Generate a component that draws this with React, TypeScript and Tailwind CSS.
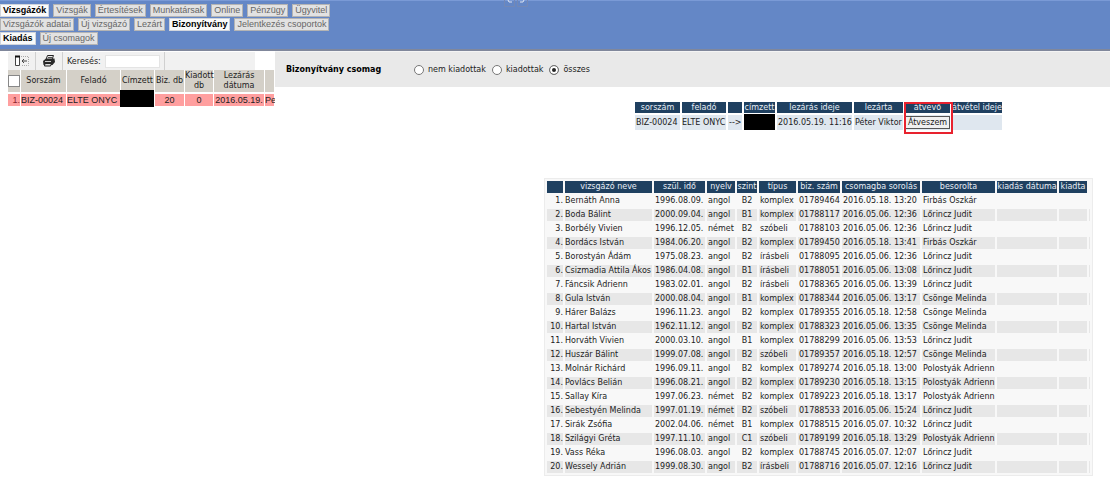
import React from "react";

const mainTabs = ["Vizsgázók", "Vizsgák", "Értesítések", "Munkatársak", "Online", "Pénzügy", "Ügyvitel"];
const subTabs = ["Vizsgázók adatai", "Új vizsgázó", "Lezárt", "Bizonyítvány", "Jelentkezés csoportok"];
const pageTabs = ["Kiadás", "Új csomagok"];

// name, birth date, language, level, type, certificate no., packed at, packed by
const candidates = [
  ["Bernáth Anna", "1996.08.09.", "angol", "B2", "komplex", "01789464", "2016.05.18. 13:20", "Firbás Oszkár"],
  ["Boda Bálint", "2000.09.04.", "angol", "B1", "komplex", "01788117", "2016.05.06. 12:36", "Lőrincz Judit"],
  ["Borbély Vivien", "1996.12.05.", "német", "B2", "szóbeli", "01788103", "2016.05.06. 12:36", "Lőrincz Judit"],
  ["Bordács István", "1984.06.20.", "angol", "B2", "komplex", "01789450", "2016.05.18. 13:41", "Firbás Oszkár"],
  ["Borostyán Ádám", "1975.08.23.", "angol", "B2", "írásbeli", "01788095", "2016.05.06. 12:36", "Lőrincz Judit"],
  ["Csizmadia Attila Ákos", "1986.04.08.", "angol", "B1", "írásbeli", "01788051", "2016.05.06. 13:08", "Lőrincz Judit"],
  ["Fáncsik Adrienn", "1983.02.01.", "angol", "B2", "írásbeli", "01788365", "2016.05.06. 13:39", "Lőrincz Judit"],
  ["Gula István", "2000.08.04.", "angol", "B1", "komplex", "01788344", "2016.05.06. 13:17", "Csönge Melinda"],
  ["Hárer Balázs", "1996.11.23.", "angol", "B2", "komplex", "01789355", "2016.05.18. 12:58", "Csönge Melinda"],
  ["Hartal István", "1962.11.12.", "angol", "B2", "komplex", "01788323", "2016.05.06. 13:35", "Csönge Melinda"],
  ["Horváth Vivien", "2000.03.10.", "angol", "B1", "komplex", "01788299", "2016.05.06. 13:53", "Lőrincz Judit"],
  ["Huszár Bálint", "1999.07.08.", "angol", "B2", "szóbeli", "01789357", "2016.05.18. 12:57", "Csönge Melinda"],
  ["Molnár Richárd", "1996.09.11.", "angol", "B2", "komplex", "01789274", "2016.05.18. 13:00", "Polostyák Adrienn"],
  ["Povlács Belián", "1996.08.21.", "angol", "B2", "komplex", "01789230", "2016.05.18. 13:15", "Polostyák Adrienn"],
  ["Sallay Kíra", "1997.06.23.", "német", "B2", "komplex", "01789223", "2016.05.18. 13:17", "Polostyák Adrienn"],
  ["Sebestyén Melinda", "1997.01.19.", "német", "B2", "szóbeli", "01788533", "2016.05.06. 15:24", "Lőrincz Judit"],
  ["Sirák Zsófia", "2002.04.06.", "német", "B1", "komplex", "01788515", "2016.05.07. 10:32", "Lőrincz Judit"],
  ["Szilágyi Gréta", "1997.11.10.", "angol", "C1", "szóbeli", "01789199", "2016.05.18. 13:29", "Polostyák Adrienn"],
  ["Vass Réka", "1996.08.03.", "angol", "B2", "komplex", "01788745", "2016.05.07. 12:07", "Lőrincz Judit"],
  ["Wessely Adrián", "1999.08.30.", "angol", "B2", "írásbeli", "01788716", "2016.05.07. 12:16", "Lőrincz Judit"],
];

interface TabRowProps {
  tabs: string[];
  active?: string;
}

const TabRow: React.FC<TabRowProps> = ({ tabs, active }) => (
  <nav className="flex gap-1">
    {tabs.map((tab) => (
      <a
        key={tab}
        href="#"
        className={
          tab === active
            ? "border border-gray-300 bg-[#fafafa] px-[2px] font-bold text-black"
            : "border border-[#b4b4b4] bg-[#e2e2e2] px-[2px] text-[#666]"
        }
      >
        {tab}
      </a>
    ))}
  </nav>
);

const Header = () => (
  <header className="relative flex h-[51px] flex-col gap-px border-t border-b-2 border-t-[#7a9ad6] border-b-[#80879b] bg-[#6487c6] pt-[3px] font-['Liberation_Sans',sans-serif] text-[9px] leading-[11px] whitespace-nowrap">
    <TabRow tabs={mainTabs} active="Vizsgázók" />
    <TabRow tabs={subTabs} active="Bizonyítvány" />
    <TabRow tabs={pageTabs} active="Kiadás" />
    <svg className="absolute -top-px left-[504px]" width="24" height="7" fill="none">
      <path d="M.5 0v6.500h10V0M13.500 0v6.500h10V0" stroke="#7388b5" />
      <path d="M4 0l1 2h3M20 0l-1 2h-3" stroke="#dfe6f3" />
    </svg>
  </header>
);

const PackageList = () => (
  <aside className="w-[275px] shrink-0 overflow-hidden pt-px pl-2">
    <div className="mr-5 flex h-[18px] items-center bg-[#f1f1f1]">
      <button aria-label="Panel" className="flex h-full w-7 items-center justify-center border-r border-[#d0d0d0]">
        <svg width="15" height="12" fill="none">
          <path d="M1.500 1.500h4v9h-4z" fill="#fff" stroke="#444" />
          <path d="M1 1.500h5" stroke="#111" strokeWidth="2" />
          <path d="M7 1.500h7.500v9H7" stroke="#aaa" strokeDasharray="1 1" />
          <path d="M8 6h5M10 4L8 6l2 2" stroke="#444" />
        </svg>
      </button>
      <button aria-label="Nyomtatás" className="flex h-full w-[27px] items-center justify-center border-r border-[#d0d0d0]">
        <svg width="12" height="12">
          <path d="M4.500 .5h6L9 4.500H3z" fill="#eee" stroke="#222" />
          <path d="M5 2.500h4" stroke="#555" />
          <path d="M0 6l3-2.500h8.500L12 7l-2.500 3H.5z" fill="#2a2a2a" />
          <path d="M2 6.500h6" stroke="#ccc" />
          <path d="M2 8.500h6.500l-1 2.500h-6z" fill="#ddd" stroke="#222" />
        </svg>
      </button>
      <label htmlFor="search" className="pt-px pl-1">
        Keresés:
      </label>
      <input id="search" className="ml-1 h-[13px] w-[55px] border border-[#e4e4e4] bg-white px-1 outline-none" />
      <div className="ml-1 h-full border-l border-[#d0d0d0]" />
    </div>
    <table className="-ml-px w-[268px] table-fixed border-separate border-spacing-x-px border-spacing-y-0 whitespace-nowrap">
      <colgroup>
        <col className="w-[12px]" />
        <col className="w-[45px]" />
        <col className="w-[53px]" />
        <col className="w-[33px]" />
        <col className="w-[29px]" />
        <col className="w-[28px]" />
        <col className="w-[50px]" />
        <col />
      </colgroup>
      <thead>
        <tr className="h-[22px] bg-[#d4d0c8] leading-[10px] [&>th]:p-0 [&>th]:font-normal">
          <th>
            <input
              type="checkbox"
              aria-label="Összes kijelölése"
              className="block size-3 appearance-none border border-[#888] bg-white"
            />
          </th>
          <th>Sorszám</th>
          <th>Feladó</th>
          <th>Címzett</th>
          <th>Biz. db</th>
          <th>
            Kiadott
            <br />
            db
          </th>
          <th>
            Lezárás
            <br />
            dátuma
          </th>
          <th />
        </tr>
      </thead>
      <tbody>
        <tr className="font-['Liberation_Sans',sans-serif] text-[9px] leading-3 [&>td]:border-t-2 [&>td]:border-white [&>td]:bg-[#ff9f9f] [&>td]:p-0">
          <td className="text-right text-[#8a2630]">1.</td>
          <td>BIZ-00024</td>
          <td>ELTE ONYC</td>
          <td className="relative">
            <div className="absolute -top-1 right-0 -left-px h-[17px] bg-black" />
          </td>
          <td className="text-center">20</td>
          <td className="text-center">0</td>
          <td className="text-center">2016.05.19.</td>
          <td>Pe</td>
        </tr>
      </tbody>
    </table>
  </aside>
);

const StatusFilter = () => (
  <form className="flex h-9 items-center border-t border-[#f4f4f4] bg-[#e9e9e9] pl-[11px]">
    <span className="w-[128px] font-bold text-black">Bizonyítvány csomag</span>
    <div className="flex gap-[6px]">
      {["nem kiadottak", "kiadottak", "összes"].map((option) => (
        <label key={option} className="flex items-center gap-1">
          <input
            type="radio"
            name="status"
            defaultChecked={option === "összes"}
            className="size-[10px] appearance-none rounded-full border border-[#777] bg-white checked:bg-[#222] checked:shadow-[inset_0_0_0_2px_white]"
          />
          {option}
        </label>
      ))}
    </div>
  </form>
);

const PackageTable = () => (
  <table className="w-[371px] table-fixed border-separate border-spacing-[2px] whitespace-nowrap">
    <colgroup>
      <col className="w-[45px]" />
      <col className="w-[44px]" />
      <col className="w-[14px]" />
      <col className="w-[31px]" />
      <col className="w-[75px]" />
      <col className="w-[49px]" />
      <col className="w-[45px]" />
      <col className="w-[50px]" />
    </colgroup>
    <thead>
      <tr className="leading-[11px] text-[#e8eef5] [&>th]:bg-[#1f4060] [&>th]:p-0 [&>th]:font-normal">
        <th>sorszám</th>
        <th>feladó</th>
        <th />
        <th>címzett</th>
        <th>lezárás ideje</th>
        <th>lezárta</th>
        <th>átvevő</th>
        <th>átvétel ideje</th>
      </tr>
    </thead>
    <tbody>
      <tr className="h-[15px] [&>td]:bg-[#dfe7ef] [&>td]:p-0">
        <td className="pl-px!">BIZ-00024</td>
        <td>ELTE ONYC</td>
        <td className="pl-px!">--&gt;</td>
        <td className="relative">
          <div className="absolute inset-x-0 -top-px h-4 bg-black" />
        </td>
        <td className="pl-px!">2016.05.19. 11:16</td>
        <td className="pl-px!">Péter Viktor</td>
        <td className="relative">
          <button className="block h-[13px] w-full border border-[#555] bg-[#f0f0f0] leading-[11px]">Átveszem</button>
          <div className="pointer-events-none absolute -top-[13px] -right-[3px] -bottom-1 -left-px border-2 border-[#e8222e]" />
        </td>
        <td />
      </tr>
    </tbody>
  </table>
);

const CandidateTable = () => (
  <table className="w-[549px] table-fixed border-separate border-spacing-[2px] border border-[#ececec] bg-[#f8f8f8] whitespace-nowrap">
    <colgroup>
      <col className="w-[16px]" />
      <col className="w-[87px]" />
      <col className="w-[51px]" />
      <col className="w-[28px]" />
      <col className="w-[20px]" />
      <col className="w-[37px]" />
      <col className="w-[42px]" />
      <col className="w-[78px]" />
      <col className="w-[73px]" />
      <col className="w-[60px]" />
      <col className="w-[28px]" />
      <col />
    </colgroup>
    <thead>
      <tr className="leading-3 text-[#e8eef5] [&>th]:bg-[#1f4060] [&>th]:p-0 [&>th]:font-normal">
        <th />
        <th>vizsgázó neve</th>
        <th>szül. idő</th>
        <th>nyelv</th>
        <th>szint</th>
        <th>típus</th>
        <th>biz. szám</th>
        <th>csomagba sorolás</th>
        <th>besorolta</th>
        <th>kiadás dátuma</th>
        <th>kiadta</th>
        <td className="p-0" />
      </tr>
    </thead>
    <tbody>
      {candidates.map(([name, born, language, level, type, number, packedAt, packedBy], i) => (
        <tr key={number} className="leading-3 [&:nth-child(even)>td]:bg-[#e7e7e7] [&>td]:p-0">
          <td className="text-right">{i + 1}.</td>
          <td>{name}</td>
          <td className="pl-px!">{born}</td>
          <td className="pl-px!">{language}</td>
          <td className="text-center">{level}</td>
          <td className="pl-px!">{type}</td>
          <td className="pl-px!">{number}</td>
          <td className="pl-px!">{packedAt}</td>
          <td className="pl-px!">{packedBy}</td>
          <td />
          <td />
          <td />
        </tr>
      ))}
    </tbody>
  </table>
);

const App: React.FC = () => {
  return (
    <div className="min-h-screen bg-white font-['DejaVu_Sans',sans-serif] text-[8px] leading-3 text-[#222]">
      <Header />
      <div className="flex">
        <PackageList />
        <main className="min-w-0 flex-1">
          <StatusFilter />
          <div className="flex flex-col items-center gap-[46px] pt-[13px] pl-[252px]">
            <PackageTable />
            <CandidateTable />
          </div>
        </main>
      </div>
    </div>
  );
};

export default App;
